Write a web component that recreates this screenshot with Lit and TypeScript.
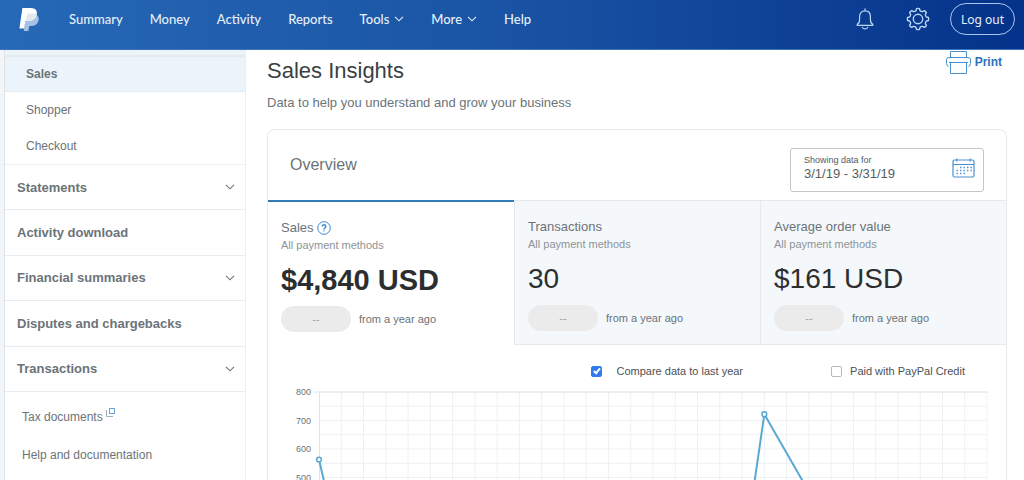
import { LitElement, html, svg, css, nothing } from "lit";
import { customElement, property, state } from "lit/decorators.js";
import { classMap } from "lit/directives/class-map.js";

const chevron = html`<svg class="chevron" viewBox="0 0 10 6" width="10" height="6" aria-hidden="true">
  <path d="M1 0.8 L5 4.8 L9 0.8" fill="none" stroke="currentColor" stroke-width="1.1" />
</svg>`;

@customElement("top-nav")
class TopNav extends LitElement {
  static styles = css`
    :host {
      display: block;
      color: #e6effa;
      font-family: Lato, "Open Sans", sans-serif;
      font-size: 13px;
      font-weight: 500;
      line-height: 20px;
    }
    .bar {
      box-sizing: border-box;
      display: flex;
      align-items: center;
      height: 50px;
      padding: 0 9px 11px 19px;
      border-bottom: 1px solid #3c74bd;
      background: linear-gradient(90deg, #2669b6 0%, #1a53a4 50%, #04328a 100%);
    }
    .logo {
      display: flex;
      margin-right: 30px;
    }
    .links {
      display: flex;
      gap: 26px;
      flex: 1;
    }
    .link {
      display: flex;
      align-items: center;
      gap: 8px;
      color: inherit;
      text-decoration: none;
      white-space: nowrap;
    }
    .links {
      gap: 27px;
    }
    .link {
      gap: 5px;
    }
    .tools {
      display: flex;
      align-items: center;
    }
    .icon {
      display: flex;
      padding: 0;
      border: 0;
      background: none;
      color: #b9d6f2;
      margin-right: 32px;
    }
    .icon.gear {
      margin-right: 20px;
    }
    .logout {
      box-sizing: border-box;
      height: 32px;
      padding: 0 10px;
      border: 1px solid #a9c6ea;
      border-radius: 16px;
      background: none;
      color: inherit;
      font-family: "Noto Sans", sans-serif;
      font-size: 12px;
      white-space: nowrap;
    }
  `;

  private items = [
    { label: "Summary" },
    { label: "Money" },
    { label: "Activity" },
    { label: "Reports" },
    { label: "Tools", menu: true },
    { label: "More", menu: true },
    { label: "Help" },
  ];

  render() {
    return html`<header class="bar">
      <a class="logo" href="#" aria-label="PayPal">
        <svg viewBox="0 0 20 25" width="20" height="25" aria-hidden="true">
          <path d="M7 8 H18 Q21 11 19 15 Q17.5 19 12 19 H10.2 L9.4 24 H4.8 Z" fill="#a3c2e4" />
          <path d="M3.4 1 H12 Q18.6 1 17.8 7 Q16.8 14 9.6 14 H6.4 L5.2 21.5 H0.4 Z" fill="#fff" />
          <path d="M8.2 6.6 H17.8 Q17 14 9.6 14 H7 Z" fill="#e3e9ef" />
        </svg>
      </a>
      <nav class="links">
        ${this.items.map((i) => html`<a class="link" href="#">${i.label}${i.menu ? chevron : nothing}</a>`)}
      </nav>
      <div class="tools">
        <button class="icon" aria-label="Notifications">
          <svg viewBox="0 0 18 22" width="18" height="22" fill="none" stroke="currentColor" stroke-width="1.2" stroke-linecap="round" stroke-linejoin="round">
            <path d="M9 0.8 V2.6 M1.2 17.4 H16.8 M1.2 17.4 V16.4 C3 15.6 3.6 14 3.6 11.6 V8.6 C3.6 5 5.8 2.8 9 2.8 C12.2 2.8 14.4 5 14.4 8.6 V11.6 C14.4 14 15 15.6 16.8 16.4 V17.4 M6.4 19.4 C7.4 21.4 10.6 21.4 11.6 19.4" />
          </svg>
        </button>
        <button class="icon gear" aria-label="Settings">
          <svg viewBox="-12 -12 24 24" width="24" height="24" fill="none" stroke="currentColor" stroke-width="1.4" stroke-linejoin="round">
            <circle r="4.7" />
            <path d=${gearPath()} />
          </svg>
        </button>
        <button class="logout">Log out</button>
      </div>
    </header>`;
  }
}

/* Outline of an eight-toothed gear centred on the origin. */
function gearPath() {
  const at = (radius: number, degrees: number) => {
    const a = (degrees * Math.PI) / 180;
    return `${(radius * Math.cos(a)).toFixed(2)} ${(radius * Math.sin(a)).toFixed(2)}`;
  };
  let d = "";
  for (let i = 0; i < 8; i++) {
    const c = i * 45 - 90;
    d += `${i ? "L" : "M"}${at(8.7, c - 13)} L${at(10.5, c - 8)} Q${at(10.9, c)} ${at(10.5, c + 8)} L${at(8.7, c + 13)} Q${at(7.8, c + 22.5)} ${at(8.7, c + 32)} `;
  }
  return d + "Z";
}

@customElement("side-menu")
class SideMenu extends LitElement {
  static styles = css`
    :host {
      display: block;
      color: #6c7378;
      font-size: 12px;
      background: #fff;
      border-left: 1px solid #dfe3e6;
      border-right: 1px solid #eceff1;
    }
    .heading {
      height: 5px;
      background: #ebf4fb;
      border-bottom: 2px solid #e6eaeb;
    }
    .sub,
    .section,
    .link {
      box-sizing: border-box;
      display: flex;
      align-items: center;
      color: inherit;
      text-decoration: none;
    }
    .sub {
      height: 36px;
      padding-left: 21px;
    }
    .sub.current {
      height: 35px;
      background: #ebf4fb;
      border-bottom: 1px solid #e4ebef;
      font-weight: bold;
    }
    .sections {
      display: grid;
      grid-auto-rows: 1fr;
      height: 227px;
      border-top: 1px solid #eceeef;
    }
    .section {
      justify-content: space-between;
      padding: 0 10px 0 12px;
      border-bottom: 1px solid #e9ecee;
      font-size: 13px;
      font-weight: bold;
    }
    .links {
      padding-top: 6px;
    }
    .link {
      height: 38px;
      padding-left: 17px;
      gap: 3px;
    }
    .external {
      align-self: flex-start;
      margin-top: 10px;
    }
  `;

  private sections = [
    { label: "Statements", open: true },
    { label: "Activity download" },
    { label: "Financial summaries", open: true },
    { label: "Disputes and chargebacks" },
    { label: "Transactions", open: true },
  ];

  render() {
    return html`<nav>
      <div class="heading"></div>
      <a class="sub current" href="#">Sales</a>
      <a class="sub" href="#">Shopper</a>
      <a class="sub" href="#">Checkout</a>
      <div class="sections">
        ${this.sections.map((s) => html`<a class="section" href="#">${s.label}${s.open ? chevron : nothing}</a>`)}
      </div>
      <div class="links">
        <a class="link" href="#"
          >Tax documents
          <svg class="external" viewBox="0 0 9 9" width="9" height="9" fill="none" aria-hidden="true">
            <path d="M0.5 2 V8.5 H7" stroke="#a5b0b8" />
            <rect x="3.5" y="0.5" width="5" height="5" stroke="#6aa5dc" />
          </svg>
        </a>
        <a class="link" href="#">Help and documentation</a>
      </div>
    </nav>`;
  }
}

@customElement("metric-tab")
class MetricTab extends LitElement {
  @property() label = "";
  @property() value = "";
  @property({ type: Boolean }) selected = false;

  static styles = css`
    :host {
      display: block;
    }
    .tab {
      box-sizing: border-box;
      display: block;
      width: 100%;
      height: 100%;
      padding: 17px 13px 13px;
      border: 0 solid #e4e9ec;
      border-width: 1px 0 1px 1px;
      background: #f4f8fb;
      color: #6c7378;
      font: inherit;
      text-align: left;
    }
    .tab.selected {
      border-width: 2px 0 0;
      border-color: #337ab7;
      background: #fff;
    }
    .label {
      display: flex;
      align-items: center;
      gap: 3px;
      font-size: 13px;
      line-height: 18px;
    }
    .note {
      display: block;
      color: #8d9397;
      font-size: 11px;
      line-height: 16px;
    }
    .value {
      display: block;
      padding: 10px 0 9px;
      color: #2c2e2f;
      font-size: 28px;
      line-height: 34px;
      white-space: nowrap;
    }
    .selected .value {
      font-size: 29px;
      font-weight: bold;
    }
    .change {
      display: flex;
      align-items: center;
      gap: 8px;
      font-size: 11px;
    }
    .pill {
      width: 70px;
      border-radius: 13px;
      background: #ebebeb;
      color: #9da3a6;
      line-height: 26px;
      text-align: center;
    }
  `;

  render() {
    return html`<button class=${classMap({ tab: true, selected: this.selected })}>
      <span class="label"
        >${this.label}${this.selected
          ? html`<svg viewBox="0 0 14 14" width="14" height="14" fill="none" stroke="#3c88cf" aria-hidden="true">
              <circle cx="7" cy="7" r="6.3" />
              <path d="M5.2 5.6 C5.2 3.2 8.8 3.2 8.8 5.4 C8.8 6.8 7 6.8 7 8.4 M7 9.4 V10.6" stroke-width="1.4" />
            </svg>`
          : nothing}</span
      >
      <span class="note">All payment methods</span>
      <span class="value">${this.value}</span>
      <span class="change"><span class="pill">--</span>from a year ago</span>
    </button>`;
  }
}

@customElement("sales-chart")
class SalesChart extends LitElement {
  static styles = css`
    :host {
      display: block;
    }
    .chart {
      display: block;
      width: 100%;
      height: auto;
    }
    .grid {
      stroke: #edf1f3;
    }
    .axis {
      stroke: #e0e4e6;
    }
    .line {
      fill: none;
      stroke: #5ba9d2;
      stroke-width: 2;
      stroke-linejoin: round;
    }
    .dot {
      fill: #fff;
      stroke: #5ba9d2;
      stroke-width: 1.5;
    }
    .tick {
      fill: #6c7378;
      font-size: 9px;
      text-anchor: end;
    }
  `;

  private points = [
    { day: 0, amount: 563 },
    { day: 1, amount: 228 },
    { day: 4, amount: 120 },
    { day: 19, amount: 185 },
    { day: 20, amount: 722 },
    { day: 22, amount: 450 },
    { day: 30, amount: 90 },
  ];

  private x = (day: number) => 29 + (day * 668) / 30;
  private y = (amount: number) => 6 + (800 - amount) * 0.285;

  render() {
    const days = Array.from({ length: 30 }, (_, i) => i + 1);
    const levels = Array.from({ length: 17 }, (_, i) => i * 50);
    const path = this.points.map((p) => `${this.x(p.day)},${this.y(p.amount)}`).join(" ");
    return html`<svg class="chart" viewBox="0 0 698 240" role="img" aria-label="Sales by day">
      ${levels.map((v) => svg`<line class="grid" x1="29" x2="697" y1=${this.y(v)} y2=${this.y(v)} />`)}
      ${days.map((d) => svg`<line class="grid" x1=${this.x(d)} x2=${this.x(d)} y1="6" y2="234" />`)}
      <path class="axis" d="M24 6 H697 M29.5 6 V234" />
      ${levels
        .filter((v) => v % 100 === 0)
        .map((v) => svg`<text class="tick" x="21" y=${this.y(v) + 3}>${v}</text>`)}
      <polyline class="line" points=${path} />
      ${this.points.map((p) => svg`<circle class="dot" cx=${this.x(p.day)} cy=${this.y(p.amount)} r="2.4" />`)}
    </svg>`;
  }
}

@customElement("app-root")
class AppRoot extends LitElement {
  @state() private compare = true;
  @state() private credit = false;

  static styles = css`
    :host {
      display: flex;
      flex-direction: column;
      height: 100vh;
      overflow: hidden;
      background: #fff;
      color: #6c7378;
      font-family: "Liberation Sans", Arial, sans-serif;
    }
    .page {
      display: grid;
      grid-template-columns: 242px minmax(0, 1fr);
      flex: 1;
      min-height: 0;
      overflow: hidden;
      border-left: 4px solid #f3f6f8;
    }
    .main {
      padding: 0 17px 0 21px;
    }
    .top {
      display: flex;
      justify-content: space-between;
      align-items: flex-start;
      padding-right: 5px;
    }
    .title {
      margin: 0;
      padding-top: 7px;
      color: #3b3f42;
      font-size: 22px;
      font-weight: normal;
      line-height: 28px;
    }
    .print {
      display: flex;
      align-items: center;
      gap: 4px;
      padding: 0;
      border: 0;
      background: none;
      color: #2d72bb;
      font: bold 12px/22px "Liberation Sans", Arial, sans-serif;
    }
    .lead {
      margin: 9px 0 17px;
      font-size: 13px;
      line-height: 18px;
    }
    .card {
      border: 1px solid #e6eaef;
      border-radius: 8px;
    }
    .cardhead {
      display: flex;
      justify-content: space-between;
      align-items: flex-start;
      padding: 18px 22px 8px;
    }
    .subtitle {
      margin: 0;
      font-size: 16px;
      font-weight: normal;
      line-height: 34px;
    }
    .range {
      box-sizing: border-box;
      display: flex;
      align-items: center;
      justify-content: space-between;
      width: 194px;
      height: 44px;
      padding: 0 8px 4px 13px;
      border: 1px solid #c3c7ca;
      border-radius: 3px;
      background: #fff;
      color: #565c60;
      font: inherit;
      font-size: 13px;
      line-height: 16px;
      text-align: left;
    }
    .small {
      display: block;
      font-size: 9px;
      line-height: 12px;
    }
    .tabs {
      display: grid;
      grid-template-columns: repeat(3, minmax(0, 1fr));
    }
    .options {
      display: flex;
      justify-content: flex-end;
      gap: 88px;
      padding: 17px 41px 6px 0;
      color: #4b5155;
      font-size: 11px;
      line-height: 18px;
    }
    .option {
      display: flex;
      align-items: center;
      gap: 8px;
    }
    .option.wide {
      gap: 14px;
    }
    .box {
      appearance: none;
      box-sizing: border-box;
      display: grid;
      place-items: center;
      width: 11px;
      height: 11px;
      margin: 0;
      border: 1px solid #b4b8bc;
      border-radius: 2px;
      background: #fff;
    }
    .box:checked {
      border-color: #2f7cf0;
      background: #2f7cf0;
    }
    .box:checked::before {
      content: "";
      box-sizing: border-box;
      width: 4px;
      height: 7px;
      margin-bottom: 1px;
      border: solid #fff;
      border-width: 0 2px 2px 0;
      transform: rotate(40deg);
    }
    .plot {
      padding: 0 18px 20px 22px;
    }
  `;

  render() {
    const dots = [4.5, 8, 11.5, 15, 18.5];
    return html`<top-nav></top-nav>
      <div class="page">
        <side-menu></side-menu>
        <main class="main">
          <div class="top">
            <h1 class="title">Sales Insights</h1>
            <button class="print">
              <svg viewBox="0 0 25 24" width="25" height="24" fill="none" stroke="#4a90cf" aria-hidden="true">
                <path d="M4.5 7.5 V1.5 H20.5 V7.5 M2.5 16.5 Q0.5 16 0.5 13.5 V10 Q0.5 7.5 3 7.5 H22 Q24.5 7.5 24.5 10 V13.5 Q24.5 16 22.5 16.5 M3 12.5 H22" />
                <path d="M4.5 12.5 V23.5 H20.5 V12.5" />
              </svg>
              Print
            </button>
          </div>
          <p class="lead">Data to help you understand and grow your business</p>
          <section class="card">
            <div class="cardhead">
              <h2 class="subtitle">Overview</h2>
              <button class="range">
                <span><span class="small">Showing data for</span>3/1/19 - 3/31/19</span>
                <svg viewBox="0 0 23 20" width="23" height="20" fill="none" stroke="#4a8fd3" stroke-width="1.2" aria-hidden="true">
                  <rect x="1" y="2" width="21" height="17" rx="1.5" />
                  <path d="M1 6.5 H22 M4.8 0.4 V3.6 M18.2 0.4 V3.6" />
                  ${[9.5, 12.5, 15.5].map((y, row) =>
                    dots
                      .filter((_, i) => !(row === 0 && i === 0) && !(row === 2 && i > 2))
                      .map((x) => svg`<path d=${`M${x} ${y} h1.4`} stroke-width="1.4" />`)
                  )}
                </svg>
              </button>
            </div>
            <div class="tabs">
              <metric-tab label="Sales" value="$4,840 USD" selected></metric-tab>
              <metric-tab label="Transactions" value="30"></metric-tab>
              <metric-tab label="Average order value" value="$161 USD"></metric-tab>
            </div>
            <div class="options">
              <label class="option wide">
                <input
                  class="box"
                  type="checkbox"
                  .checked=${this.compare}
                  @change=${() => (this.compare = !this.compare)}
                />Compare data to last year
              </label>
              <label class="option">
                <input
                  class="box"
                  type="checkbox"
                  .checked=${this.credit}
                  @change=${() => (this.credit = !this.credit)}
                />Paid with PayPal Credit
              </label>
            </div>
            <div class="plot"><sales-chart></sales-chart></div>
          </section>
        </main>
      </div>`;
  }
}
